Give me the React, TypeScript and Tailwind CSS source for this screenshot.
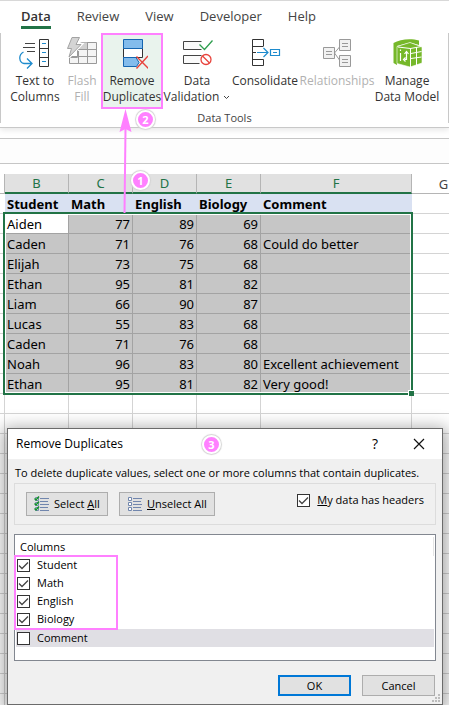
import React, { useState } from 'react';

interface Student {
  name: string;
  math: number;
  english: number;
  biology: number;
  comment: string;
}

interface ColumnOption {
  label: string;
  checked: boolean;
}

const students: Student[] = [
  { name: 'Aiden', math: 77, english: 89, biology: 69, comment: '' },
  { name: 'Caden', math: 71, english: 76, biology: 68, comment: 'Could do better' },
  { name: 'Elijah', math: 73, english: 75, biology: 68, comment: '' },
  { name: 'Ethan', math: 95, english: 81, biology: 82, comment: '' },
  { name: 'Liam', math: 66, english: 90, biology: 87, comment: '' },
  { name: 'Lucas', math: 55, english: 83, biology: 68, comment: '' },
  { name: 'Caden', math: 71, english: 76, biology: 68, comment: '' },
  { name: 'Noah', math: 96, english: 83, biology: 80, comment: 'Excellent achievement' },
  { name: 'Ethan', math: 95, english: 81, biology: 82, comment: 'Very good!' },
];

const tabs = ['Data', 'Review', 'View', 'Developer', 'Help'];
const emptyRows = Array.from({ length: 16 }, (_, i) => i);

// Icons of the ribbon
const TextToColumnsIcon = () => (
  <svg width="32" height="32" viewBox="0 0 32 32" fill="none">
    <path d="M6 6.5h10M4 10.5h12M8 14.5h8" stroke="#444" />
    <path d="M20.5 2.5h9v27h-9zM20.5 11.5h9M20.5 20.5h9" stroke="#333" />
    <path d="M23 6.5h4M23 15.5h4M23 24.5h4" stroke="#1e8bcd" />
    <path d="M4.5 15C-1 18 0 25.5 5 26.5h7M8 21.5l5 5-5 5" stroke="#1e8bcd" strokeWidth="1.3" />
  </svg>
);

const FlashFillIcon = () => (
  <svg width="32" height="32" viewBox="0 0 32 32" fill="none">
    <path d="M15.5 5.5h15v21h-27v-6h8v-8h4z" fill="#f4f4f4" stroke="#999" />
    <path d="M14 5.5h7.5v7H11z" fill="#d0d0d0" />
    <path d="M10 12.5h20.5M3.5 19.5h27M12.5 14v12.5M21.5 5.5v21" stroke="#999" />
    <path d="M6 .5h7.5l-3.5 7h5L3 20l2.5-8.5H1.5z" fill="#d4d4d4" stroke="#fff" strokeWidth="3" />
    <path d="M6 .5h7.5l-3.5 7h5L3 20l2.5-8.5H1.5z" fill="#d4d4d4" stroke="#a3a3a3" />
  </svg>
);

const RemoveDuplicatesIcon = () => (
  <svg width="32" height="32" viewBox="0 0 32 32" fill="none">
    <path d="M7.5 11.5h19v9h-19z" fill="#fff" stroke="#333" />
    <path d="M7.5 2.5h19v9h-19z" fill="#83bcec" stroke="#1565b0" />
    <path d="M20 20.5H7.5v9h13l2.5-4z" fill="#83bcec" stroke="#1565b0" />
    <path d="M20.5 19.5l12 12M32 19L20.5 31.5" stroke="#e8433c" strokeWidth="1.4" />
  </svg>
);

const DataValidationIcon = () => (
  <svg width="32" height="32" viewBox="0 0 32 32" fill="none">
    <path d="M20.5 4.5h-18v8h18M20.5 18.5h-18v8h16" fill="#fafafa" stroke="#444" />
    <path d="M18.5 7.5l5 5 8-9" stroke="#2f9e4f" strokeWidth="1.3" />
    <circle cx="25" cy="22.5" r="5" stroke="#e8433c" strokeWidth="1.3" />
    <path d="M21.5 19l7 7" stroke="#e8433c" strokeWidth="1.3" />
  </svg>
);

const ConsolidateIcon = () => (
  <svg width="32" height="32" viewBox="0 0 32 32" fill="none">
    <path d="M14.5 9V2.5h-11v26h11v-6M3.5 9.5h11M3.5 22.5h11M3.5 15.5H7" stroke="#333" />
    <path d="M8 15.5h10.5M14.5 11l4.5 4.5-4.5 4.5M21.5 12.5h9v6h-9zM24 15.5h4" stroke="#1e8bcd" strokeWidth="1.2" />
  </svg>
);

const RelationshipsIcon = () => (
  <svg width="32" height="32" viewBox="0 0 32 32" fill="none">
    <g fill="#f1f1f1" stroke="#999">
      <path d="M2.5 10.5h11v11h-11zM18.5 2.5h11v11h-11zM18.5 18.5h11v11h-11z" />
      <path d="M5 14.5h6M5 17.5h6M21 6.5h6M21 9.5h6M21 22.5h6M21 25.5h6M13.5 16l5-6M13.5 16l5 7" />
    </g>
  </svg>
);

const DataModelIcon = () => (
  <svg width="32" height="32" viewBox="0 0 32 32" fill="none">
    {/* Back plate, then the cube with its white edge */}
    <path d="M2.5 6C9 2 20 1 28 3.5V8l-9-2.500L6 9v19l-3.500-2z" fill="#76b82a" />
    <path d="M6 9.5L19 5.5l12 4.500V26L19 30 6 26.500z" fill="#76b82a" stroke="#fff" strokeWidth=".6" />
    <path d="M19.5 11V30M7 10l12.5 1.500 11-2" stroke="#fff" />
    <path d="M20 16.5l10.500-2M20 21.500l10.500-1.500M25.500 10v18" stroke="#fff" />
    <path d="M9.5 12.500v1.500M9.500 16v8M15.500 15v7.500h-2M13.500 17l2-2.500 2 2.500M14.500 20.500l-2 2 2 2" stroke="#fff" strokeWidth="1.2" />
  </svg>
);

interface RibbonButtonProps {
  icon: React.ReactNode;
  lines: string[];
  className: string;
  disabled?: boolean;
  dropdown?: boolean;
}

const RibbonButton: React.FC<RibbonButtonProps> = ({ icon, lines, className, disabled, dropdown }) => (
  <button
    type="button"
    disabled={disabled}
    className={`flex h-19 shrink-0 flex-col items-center whitespace-nowrap border-2 pt-0.5 text-[12px] leading-4 ${disabled ? 'text-[#b1b1b1]' : 'text-[#333]'} ${className}`}
  >
    {icon}
    <span className="mt-1">{lines[0]}</span>
    {lines[1] && (
      <span className="flex items-center gap-1">
        {lines[1]}
        {dropdown && (
          <svg width="7" height="5" viewBox="0 0 7 5" fill="none">
            <path d="M1 1l2.5 2.5L6 1" stroke="#444" />
          </svg>
        )}
      </span>
    )}
  </button>
);

const StepBadge: React.FC<{ step: number; className: string }> = ({ step, className }) => (
  <span
    className={`absolute flex size-[19px] items-center justify-center rounded-full border-2 border-white bg-[#ff80ff] font-['Open_Sans',sans-serif] text-[11px] font-bold leading-none text-white shadow-[0_0_1px_1px_#d4d4d4] ${className}`}
  >
    {step}
  </span>
);

interface CheckboxProps {
  id: string;
  checked: boolean;
  onChange: () => void;
}

const Checkbox: React.FC<CheckboxProps> = ({ id, checked, onChange }) => (
  <span className="relative size-[13px] shrink-0">
    <input
      id={id}
      type="checkbox"
      checked={checked}
      onChange={onChange}
      className="block size-[13px] appearance-none border border-[#333] bg-white"
    />
    {checked && (
      <svg className="pointer-events-none absolute inset-0" width="13" height="13" viewBox="0 0 13 13" fill="none">
        <path d="M2 6.5l3 3 6-6" stroke="#444" strokeWidth="1.3" />
      </svg>
    )}
  </span>
);

const ListIcon: React.FC<{ ticked?: boolean }> = ({ ticked }) => (
  <svg width="16" height="16" viewBox="0 0 16 16" fill="none">
    <path d="M6 2.5h9M6 5.5h8M6 8.5h9M6 11.5h8M6 14.5h9" stroke="#7186ad" />
    <path d="M1.5 1.5h3v3h-3zM1.5 6.5h3v3h-3zM1.5 11.5h3v3h-3z" fill="#fff" stroke="#7186ad" />
    {ticked && <path d="M.5 2.5L2 4l3-3.5M.5 7.5L2 9l3-3.5M.5 12.5L2 14l3-3.5" stroke="#16932b" strokeWidth="1.5" />}
  </svg>
);

const Ribbon: React.FC = () => (
  <header className="relative z-10 border-b border-t border-b-[#c8c8c8] border-t-[#d8d8d8] bg-white font-['Open_Sans',sans-serif] shadow-[0_2px_6px_#0000001a]">
    <nav className="flex h-7 items-end gap-[26px] pl-[21px] text-[13px] leading-5 text-[#444]">
      {tabs.map(tab => (
        <button
          key={tab}
          type="button"
          className={`h-[26px] border-b-3 pt-0.5 ${tab === 'Data' ? 'border-[#217346] font-semibold text-[#333]' : 'border-transparent'}`}
        >
          {tab}
        </button>
      ))}
    </nav>
    <div className="mt-1 mb-1 border-x border-[#c8c8c8]">
      <div className="flex pl-[3px]">
        <RibbonButton icon={<TextToColumnsIcon />} lines={['Text to', 'Columns']} className="w-[62px] border-transparent" />
        <RibbonButton icon={<FlashFillIcon />} lines={['Flash', 'Fill']} className="w-[32px] border-transparent" disabled />
        <RibbonButton
          icon={<RemoveDuplicatesIcon />}
          lines={['Remove', 'Duplicates']}
          className="ml-[3px] w-[62px] border-[#ff80ff] bg-[#e9f3ed]"
        />
        <RibbonButton icon={<DataValidationIcon />} lines={['Data', 'Validation']} className="w-[68px] border-transparent" dropdown />
        <RibbonButton icon={<ConsolidateIcon />} lines={['Consolidate']} className="w-[68px] border-transparent" />
        <RibbonButton icon={<RelationshipsIcon />} lines={['Relationships']} className="w-[76px] border-transparent" disabled />
        <RibbonButton icon={<DataModelIcon />} lines={['Manage', 'Data Model']} className="w-[64px] border-transparent" />
      </div>
      <div className="pt-1 text-center text-[11px] leading-[10px] text-[#444]">Data Tools</div>
    </div>
  </header>
);

const Sheet: React.FC = () => {
  const line = 'h-5 border-b border-r border-[#d4d4d4] p-0';
  const selected = 'h-5 border-b border-r border-[#a3a3a3] bg-[#c6c6c6] px-0.5 py-0';
  const head = 'h-5 bg-[#d9e1f2] border-b border-[#d9e1f2] px-0.5 py-0 text-left font-bold';
  const letter = 'h-5 border-b-2 border-r border-b-[#217346] border-r-[#b5b5b5] bg-[#e1e1e1] p-0 font-normal text-[#217346]';

  return (
    <div className="relative">
      <table className="w-full table-fixed border-separate border-spacing-0 whitespace-nowrap font-['Noto_Sans',sans-serif] text-[13px] leading-[18px] text-black">
        <colgroup>
          <col className="w-[5px]" />
          <col className="w-16" />
          <col className="w-16" />
          <col className="w-16" />
          <col className="w-16" />
          <col className="w-[151px]" />
          <col className="w-16" />
          <col />
        </colgroup>
        <thead>
          <tr>
            <td className="h-5 border-b border-r border-[#b5b5b5] p-0" />
            {['B', 'C', 'D', 'E', 'F'].map(l => (
              <th key={l} className={letter}>{l}</th>
            ))}
            <th className="h-5 border-b border-r border-[#b5b5b5] p-0 font-normal text-[#444]">G</th>
            <td className="h-5 border-b border-[#b5b5b5] p-0" />
          </tr>
          <tr>
            <td className="h-5 border-b border-[#d4d4d4] p-0" />
            {['Student', 'Math', 'English', 'Biology', 'Comment'].map(h => (
              <th key={h} className={head}>{h}</th>
            ))}
            <td className={line} />
            <td className={line} />
          </tr>
        </thead>
        <tbody>
          {students.map((s, i) => (
            <tr key={i}>
              <td className={line} />
              <td className={`${selected} ${i === 0 ? '!bg-white' : ''}`}>{s.name}</td>
              <td className={`${selected} text-right`}>{s.math}</td>
              <td className={`${selected} text-right`}>{s.english}</td>
              <td className={`${selected} text-right`}>{s.biology}</td>
              <td className={selected}>{s.comment}</td>
              <td className={line} />
              <td className={line} />
            </tr>
          ))}
          {emptyRows.map(r => (
            <tr key={r}>
              {[0, 1, 2, 3, 4, 5, 6, 7].map(c => (
                <td key={c} className={line} />
              ))}
            </tr>
          ))}
        </tbody>
      </table>
      {/* Selection frame and fill handle */}
      <div className="pointer-events-none absolute left-[3px] top-[38px] h-[183px] w-[410px] border-2 border-[#217346] shadow-[inset_0_0_0_1px_#fff]">
        <span className="absolute -bottom-[3px] -right-[3px] size-[6px] border-l border-t border-white bg-[#217346]" />
      </div>
    </div>
  );
};

const RemoveDuplicatesDialog: React.FC = () => {
  const [hasHeaders, setHasHeaders] = useState(true);
  const [columns, setColumns] = useState<ColumnOption[]>([
    { label: 'Student', checked: true },
    { label: 'Math', checked: true },
    { label: 'English', checked: true },
    { label: 'Biology', checked: true },
    { label: 'Comment', checked: false },
  ]);

  const toggle = (label: string) =>
    setColumns(prev => prev.map(c => (c.label === label ? { ...c, checked: !c.checked } : c)));
  const setAll = (checked: boolean) => setColumns(prev => prev.map(c => ({ ...c, checked })));

  return (
    <section
      role="dialog"
      aria-labelledby="dialog-title"
      className="absolute left-[7px] right-[6px] top-[428px] z-20 border border-[#6b6b6b] bg-[#f0f0f0] font-['Open_Sans',sans-serif] text-[11px] leading-4 text-black shadow-[0_4px_16px_4px_#00000059]"
    >
      <div className="flex h-[30px] items-center bg-white pl-2 pr-[17px]">
        <h2 id="dialog-title" className="text-[12px]">Remove Duplicates</h2>
        <button type="button" aria-label="Help" className="ml-auto mr-[35px] text-[14px]">?</button>
        <button type="button" aria-label="Close">
          <svg width="12" height="12" viewBox="0 0 12 12" fill="none">
            <path d="M1 1l10 10M11 1L1 11" stroke="#111" strokeWidth="1.2" />
          </svg>
        </button>
      </div>
      <div className="px-[6px] pb-2 pt-[6px]">
        <p className="whitespace-nowrap pl-px">To delete duplicate values, select one or more columns that contain duplicates.</p>
        <div className="mt-0.5 flex h-[42px] items-start border border-[#dcdcdc] px-[11px] pt-2">
          <button type="button" onClick={() => setAll(true)} className="flex h-6 w-[82px] items-center gap-1 border border-[#adadad] bg-[#e1e1e1] pl-[7px] whitespace-nowrap">
            <ListIcon ticked />
            <span>Select <u>A</u>ll</span>
          </button>
          <button type="button" onClick={() => setAll(false)} className="ml-[11px] flex h-6 w-24 items-center gap-1 border border-[#adadad] bg-[#e1e1e1] pl-[7px] whitespace-nowrap">
            <ListIcon />
            <span><u>U</u>nselect All</span>
          </button>
          <label htmlFor="has-headers" className="ml-auto flex items-center gap-[7px] whitespace-nowrap">
            <Checkbox id="has-headers" checked={hasHeaders} onChange={() => setHasHeaders(!hasHeaders)} />
            <span><u>M</u>y data has headers</span>
          </label>
        </div>
        <div className="relative mt-[9px] h-[127px] border border-[#828790] bg-white px-px pt-[2px]">
          <div className="flex h-[19px] items-center border-r border-[#e5e5e5] pl-1">Columns</div>
          <ul>
            {columns.map(c => (
              <li key={c.label} className={`flex h-[18px] items-center gap-[7px] pl-px ${c.label === 'Comment' ? 'mt-px bg-[#e0dfe4]' : ''}`}>
                <Checkbox id={`column-${c.label}`} checked={c.checked} onChange={() => toggle(c.label)} />
                <label htmlFor={`column-${c.label}`}>{c.label}</label>
              </li>
            ))}
          </ul>
          {/* Highlight around the key columns */}
          <div className="pointer-events-none absolute -left-px top-5 h-[75px] w-[104px] border-2 border-[#ff80ff]" />
        </div>
        <div className="mt-[14px] flex justify-end gap-[11px] pr-px">
          <button type="button" className="h-[21px] w-[73px] border-2 border-[#0078d7] bg-[#e1e1e1] leading-none">OK</button>
          <button type="button" className="h-[21px] w-[73px] border border-[#adadad] bg-[#e1e1e1] leading-none">Cancel</button>
        </div>
      </div>
      <svg className="absolute bottom-0.5 right-0.5" width="8" height="8" viewBox="0 0 8 8" fill="#bcbcbc">
        <path d="M6 0h2v2H6zM3 3h2v2H3zM6 3h2v2H6zM0 6h2v2H0zM3 6h2v2H3zM6 6h2v2H6z" />
      </svg>
      <StepBadge step={3} className="left-[194px] top-[6px]" />
    </section>
  );
};

export default function App() {
  return (
    <main className="relative h-screen overflow-hidden bg-white">
      <Ribbon />
      <div className="mt-[10px] mb-[10px] h-[26px] border-y border-[#c6c6c6] bg-[#fdfdfd]" />
      <Sheet />
      {/* Arrow from the data to the ribbon command */}
      <svg className="pointer-events-none absolute left-[119px] top-[109px] z-10" width="13" height="104" viewBox="0 0 13 104">
        <path d="M6.5 20L5.5 104" stroke="#ff80ff" strokeWidth="2" />
        <path d="M6.5 0L12.5 23L6.5 20L.5 23z" fill="#ff80ff" />
      </svg>
      <StepBadge step={1} className="left-[131px] top-[171px] z-10" />
      <StepBadge step={2} className="left-[136px] top-[110px] z-10" />
      <RemoveDuplicatesDialog />
    </main>
  );
}
